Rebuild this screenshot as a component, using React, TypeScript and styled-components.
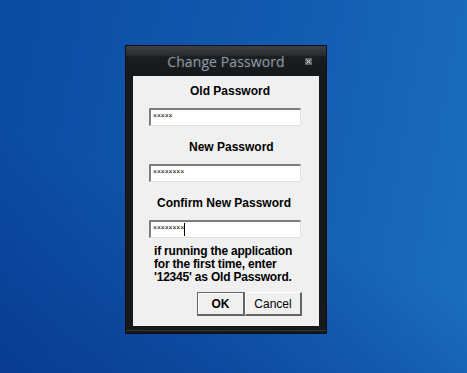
import React from "react";
import styled, { createGlobalStyle } from "styled-components";

const Global = createGlobalStyle`
  html, body { margin: 0; padding: 0; }
  body { width: 467px; height: 373px; overflow: hidden; }
`;

const Desktop = styled.div`
  width: 467px;
  height: 373px;
  box-sizing: border-box;
  padding: 45px 0 0 125px;
  background:
    linear-gradient(20deg, rgba(5, 45, 130, 0.55) 0%, rgba(5, 45, 130, 0) 45%),
    linear-gradient(100deg, #0b4aa2 0%, #125bb0 55%, #1b6ebf 100%);
  display: flex;
  align-items: flex-start;
`;

const Window = styled.div`
  width: 202px;
  height: 289px;
  box-sizing: border-box;
  border: 1px solid #0c0e10;
  background: #16191b;
  display: flex;
  flex-direction: column;
  box-shadow: inset 0 -2px 0 #16191b, inset 0 -3px 0 #30363b;
`;

const TitleBar = styled.div`
  position: relative;
  height: 30px;
  flex: none;
  background: linear-gradient(#3b4045 0px, #2a2e32 9px, #1a1d20 11px, #16191b 30px);
  display: flex;
  align-items: center;
  justify-content: center;
`;

const Title = styled.span`
  font-family: "Open Sans", "Noto Sans", sans-serif;
  font-size: 14px;
  color: #8c99a4;
  margin-top: 1px;
  letter-spacing: 0.1px;
  text-shadow: 0 0 3px rgba(140, 150, 160, 0.25);
`;

const CloseBox = styled.div`
  position: absolute;
  right: 14px;
  top: 12px;
  width: 7px;
  height: 7px;
  background: #5b6065;
  display: flex;
  align-items: center;
  justify-content: center;
`;

const Client = styled.div`
  margin: 0 7px;
  height: 250px;
  background: #f0f0f0;
  box-sizing: border-box;
  padding: 8px 0 0 16px;
  display: flex;
  flex-direction: column;
  align-items: flex-start;
  font-family: "Liberation Sans", Arial, sans-serif;
  color: #000;
`;

const Label = styled.div<{ $x: number; $mt: number }>`
  font-weight: bold;
  font-size: 12px;
  line-height: 14px;
  margin-top: ${(p) => p.$mt}px;
  margin-left: ${(p) => p.$x}px;
  white-space: nowrap;
`;

const Field = styled.div`
  margin-top: 10px;
  width: 152px;
  height: 18px;
  box-sizing: border-box;
  background: #fff;
  border-top: 2px solid #7d7d7d;
  border-left: 2px solid #7d7d7d;
  border-right: 1px solid #e3e3e3;
  border-bottom: 1px solid #e3e3e3;
  display: flex;
  align-items: center;
  padding-left: 2px;
`;

const Mask = styled.span`
  font-family: "Liberation Sans", Arial, sans-serif;
  font-size: 7px;
  line-height: 8px;
  color: #000;
  letter-spacing: -0.2px;
  margin-top: -4px;
`;

const Caret = styled.span`
  display: inline-block;
  width: 1px;
  height: 13px;
  background: #000;
  margin-top: 0px;
`;

const Help = styled.div`
  margin-top: 7px;
  margin-left: 5px;
  font-weight: bold;
  font-size: 12px;
  line-height: 13px;
  letter-spacing: -0.2px;
`;

const Buttons = styled.div`
  margin-top: 8px;
  margin-left: 48px;
  display: flex;
`;

const Button = styled.div<{ $w: number; $default?: boolean }>`
  width: ${(p) => p.$w}px;
  height: 24px;
  box-sizing: border-box;
  display: flex;
  align-items: center;
  justify-content: center;
  font-size: 12px;
  font-weight: ${(p) => (p.$default ? "bold" : "normal")};
  background: #f0f0f0;
  border-top: 1px solid ${(p) => (p.$default ? "#646464" : "#ffffff")};
  border-left: 1px solid ${(p) => (p.$default ? "#646464" : "#ffffff")};
  border-right: 2px solid #646464;
  border-bottom: 2px solid #646464;
  box-shadow: ${(p) => (p.$default ? "inset 1px 1px 0 #ffffff" : "none")};
`;

export default function App() {
  return (
    <>
      <Global />
      <Desktop>
        <Window>
          <TitleBar>
            <Title>Change Password</Title>
            <CloseBox>
              <svg width="5" height="5" viewBox="0 0 5 5">
                <path d="M0.5 0.5 L4.5 4.5 M4.5 0.5 L0.5 4.5" stroke="#d8dcdf" strokeWidth="1" />
              </svg>
            </CloseBox>
          </TitleBar>
          <Client>
            <Label $x={41} $mt={0}>Old Password</Label>
            <Field>
              <Mask>×××××</Mask>
            </Field>
            <Label $x={40} $mt={14}>New Password</Label>
            <Field>
              <Mask>××××××××</Mask>
            </Field>
            <Label $x={8} $mt={14}>Confirm New Password</Label>
            <Field>
              <Mask>××××××××</Mask>
              <Caret />
            </Field>
            <Help>
              if running the application
              <br />
              for the first time, enter
              <br />
              '12345' as Old Password.
            </Help>
            <Buttons>
              <Button $w={48} $default>OK</Button>
              <Button $w={57}>Cancel</Button>
            </Buttons>
          </Client>
        </Window>
      </Desktop>
    </>
  );
}
